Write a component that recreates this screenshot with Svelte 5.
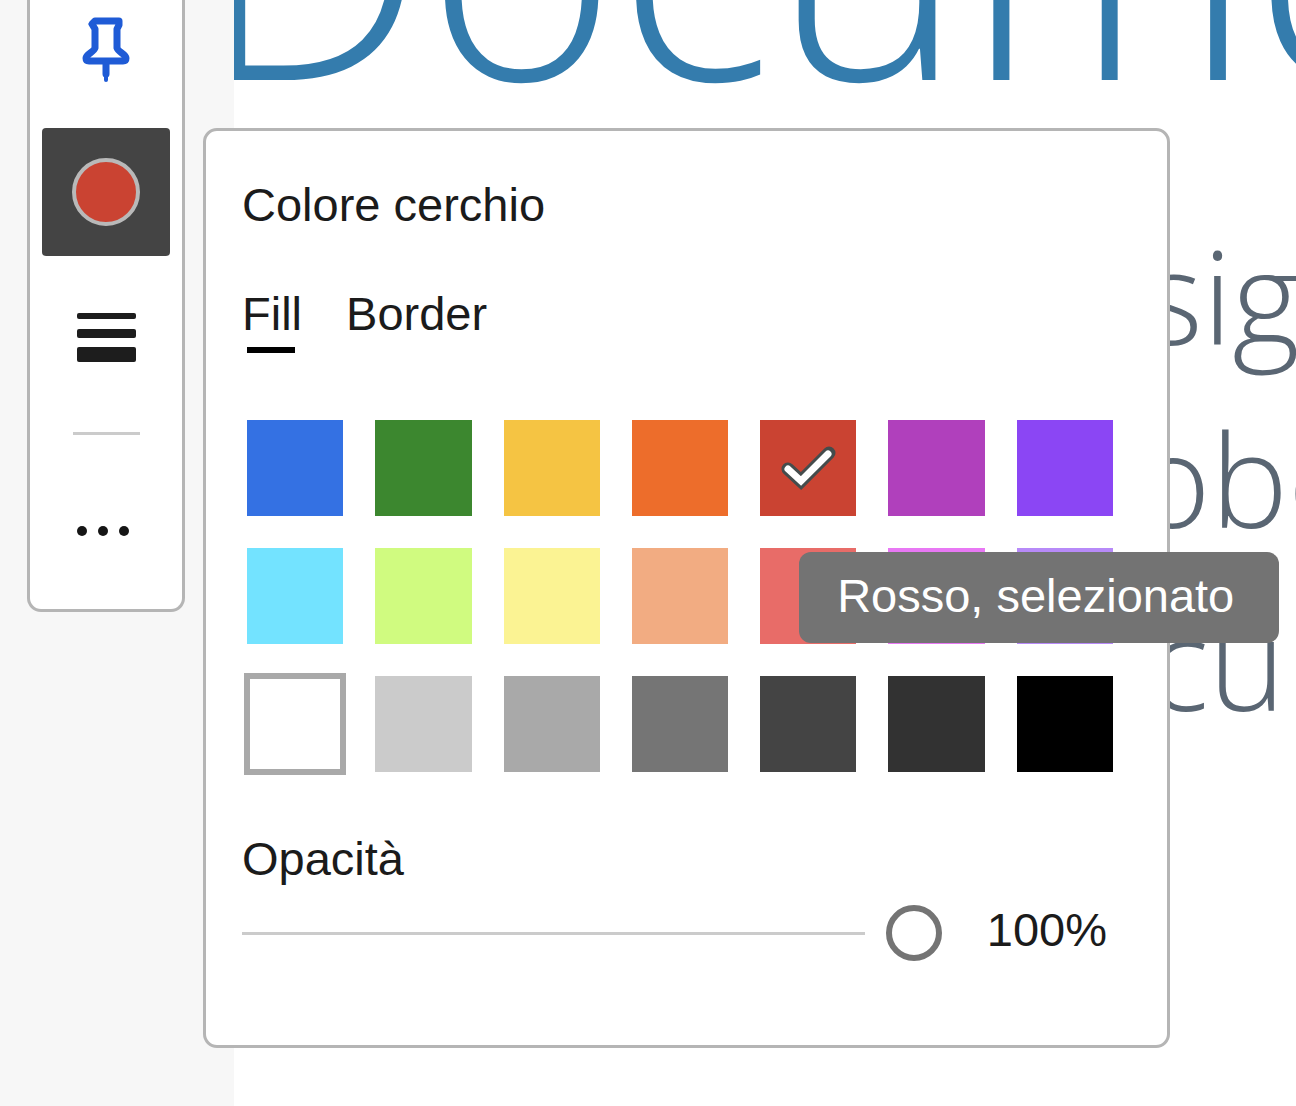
<script>
  const swatches = [
    { name: 'Blu', color: '#3471e3' },
    { name: 'Verde', color: '#3c872f' },
    { name: 'Giallo', color: '#f5c443' },
    { name: 'Arancione', color: '#ed6d2b' },
    { name: 'Rosso', color: '#ca4332' },
    { name: 'Magenta', color: '#b040bc' },
    { name: 'Viola', color: '#8b46f4' },
    { name: 'Azzurro', color: '#73e3ff' },
    { name: 'Lime', color: '#d0fb80' },
    { name: 'Giallo chiaro', color: '#fbf393' },
    { name: 'Pesca', color: '#f2ac82' },
    { name: 'Corallo', color: '#e86c68' },
    { name: 'Rosa', color: '#e878f4' },
    { name: 'Lilla', color: '#b78af8' },
    { name: 'Bianco', color: '#ffffff' },
    { name: 'Grigio chiaro', color: '#cbcbcb' },
    { name: 'Grigio', color: '#a9a9a9' },
    { name: 'Grigio medio', color: '#757575' },
    { name: 'Grigio scuro', color: '#444444' },
    { name: 'Antracite', color: '#323232' },
    { name: 'Nero', color: '#000000' }
  ];
  let selected = $state('Rosso');
  let tab = $state('Fill');
  let opacity = $state(100);
</script>

<main class="viewer">
  <article class="page">
    <h1>Document</h1>
    <p>Design<br />Adobe<br />Document</p>
  </article>

  <div class="overlay">
    <div class="toolbar" role="toolbar" aria-label="Strumenti">
      <button class="tool" aria-label="Fissa">
        <svg width="64" height="68" viewBox="0 0 64 68" fill="none" stroke="#1f5bd6" stroke-linecap="round" stroke-linejoin="round">
          <path stroke-width="7" d="M18 10 L21 7 H45 V11 L43 15 V34 C44 38 52 40 52 44 Q52 47 49 47 H15 Q12 47 12 44 C12 40 20 38 21 34 V15 Z" />
          <path stroke-width="7" d="M32 48 V60" />
          <path stroke-width="4" d="M32 60 V66" />
        </svg>
      </button>
      <button class="tool active" aria-label="Colore cerchio">
        <svg width="72" height="72" viewBox="0 0 72 72">
          <circle cx="36" cy="36" r="32" fill="#ca4332" stroke="#b9b9b9" stroke-width="4" />
        </svg>
      </button>
      <button class="tool" aria-label="Spessore">
        <svg width="64" height="64" viewBox="0 0 64 64" fill="#1d1d1d">
          <rect x="3" y="9" width="59" height="6" rx="2" />
          <rect x="3" y="25" width="59" height="9" rx="2" />
          <rect x="3" y="43" width="59" height="15" rx="2" />
        </svg>
      </button>
      <hr />
      <button class="tool" aria-label="Altro">
        <svg width="64" height="16" viewBox="0 0 64 16" fill="#151515">
          <circle cx="8" cy="8" r="5" />
          <circle cx="29" cy="8" r="5" />
          <circle cx="50" cy="8" r="5" />
        </svg>
      </button>
    </div>

    <section class="popover" aria-labelledby="popover-title">
      <h2 id="popover-title">Colore cerchio</h2>
      <div class="tabs" role="tablist">
        {#each ['Fill', 'Border'] as label}
          <button role="tab" class="tab" aria-selected={tab === label} onclick={() => (tab = label)}>{label}</button>
        {/each}
      </div>
      <ul class="swatches">
        {#each swatches as s}
          <li>
            <button
              class="swatch"
              class:outlined={s.name === 'Bianco'}
              aria-label={s.name}
              aria-pressed={selected === s.name}
              style="background:{s.color}"
              onclick={() => (selected = s.name)}
            >
              {#if selected === s.name}
                <svg viewBox="0 0 96 96" fill="none" stroke-linecap="round">
                  <path d="M28 49 L41 61 L69 33" stroke="#444c4c" stroke-width="13" />
                  <path d="M28 49 L41 61 L68 34" stroke="#fff" stroke-width="7" />
                </svg>
              {/if}
            </button>
            {#if selected === s.name}
              <span class="tooltip" role="tooltip">{s.name}, selezionato</span>
            {/if}
          </li>
        {/each}
      </ul>
      <label for="opacity">Opacità</label>
      <div class="slider">
        <input id="opacity" type="range" min="0" max="100" bind:value={opacity} />
        <output for="opacity">{opacity}%</output>
      </div>
    </section>
  </div>
</main>

<style>
  :global(body) {
    margin: 0;
  }
  .viewer {
    position: relative;
    min-height: 100vh;
    overflow: hidden;
    display: flex;
    background: #f7f7f7;
    font-family: 'Liberation Sans', Arial, sans-serif;
    font-size: 47px;
    line-height: 56px;
    color: #1b1b1b;
  }
  .page {
    flex: 1;
    min-width: 0;
    margin-left: 234px;
    background: #fff;
    overflow: hidden;
    font-family: 'Open Sans', sans-serif;
    font-weight: 300;
    white-space: nowrap;
  }
  .page h1 {
    margin: -261px 0 0 -38px;
    font-size: 326px;
    line-height: 430px;
    font-weight: 300;
    color: #347cad;
  }
  .page p {
    margin: 34px 0 0 745px;
    font-size: 130px;
    line-height: 183px;
    color: #5a6673;
  }
  button {
    border: 0;
    padding: 0;
    background: none;
    font: inherit;
    color: inherit;
    cursor: pointer;
  }
  .overlay {
    position: absolute;
    top: 0;
    left: 27px;
    right: 126px;
    display: flex;
    align-items: flex-start;
    gap: 18px;
  }
  .toolbar {
    display: flex;
    flex-direction: column;
    align-items: center;
    gap: 16px;
    margin-top: -16px;
    padding: 0 12px 14px;
    background: #fff;
    border: 3px solid #b5b5b5;
    border-top: 0;
    border-radius: 0 0 14px 14px;
  }
  .tool {
    display: flex;
    align-items: center;
    justify-content: center;
    width: 128px;
    height: 128px;
    border-radius: 4px;
  }
  .tool.active {
    background: #444;
  }
  hr {
    width: 67px;
    height: 3px;
    margin: 16px 0;
    border: 0;
    background: #cbcbcb;
  }
  .popover {
    flex: 1;
    margin-top: 128px;
    padding: 46px 54px 84px 36px;
    background: #fff;
    border: 3px solid #b5b5b5;
    border-radius: 14px;
  }
  h2 {
    margin: 0 0 53px;
    font-size: 47px;
    font-weight: 400;
  }
  .tabs {
    display: flex;
    gap: 44px;
  }
  .tab {
    padding-bottom: 11px;
  }
  .tab::after {
    content: '';
    display: block;
    height: 6px;
    margin: 5px 7px -11px 5px;
  }
  .tab[aria-selected='true']::after {
    background: #000;
  }
  .swatches {
    display: grid;
    grid-template-columns: repeat(7, 1fr);
    gap: 32px;
    margin: 67px 0 59px 5px;
    padding: 0;
    list-style: none;
  }
  .swatches li {
    position: relative;
    height: 96px;
  }
  .swatch {
    display: block;
    width: 100%;
    height: 100%;
  }
  .swatch svg {
    display: block;
    height: 96px;
    margin: 0 auto;
  }
  .outlined {
    outline: 6px solid #a9a9a9;
    outline-offset: -3px;
  }
  .tooltip {
    position: absolute;
    z-index: 1;
    top: 132px;
    left: 39px;
    padding: 16px 45px 19px 38px;
    border-radius: 12px;
    background: #737373;
    color: #fff;
    white-space: nowrap;
  }
  label {
    display: block;
    margin-bottom: 12px;
  }
  .slider {
    display: flex;
    align-items: center;
    gap: 45px;
    padding-right: 6px;
  }
  input {
    flex: 1;
    min-width: 0;
    height: 56px;
    margin: 6px 0 0;
    appearance: none;
    background: linear-gradient(#cbcbcb, #cbcbcb) left center / calc(100% - 77px) 3px no-repeat;
  }
  input::-webkit-slider-thumb {
    appearance: none;
    box-sizing: border-box;
    width: 56px;
    height: 56px;
    border: 6px solid #747474;
    border-radius: 50%;
    background: #fff;
  }
</style>
